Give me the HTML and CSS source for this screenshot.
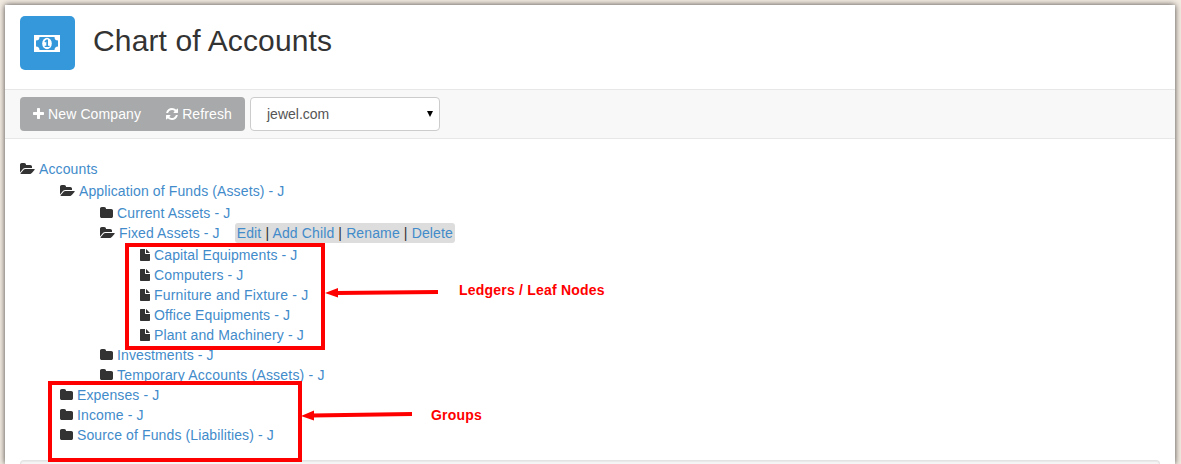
FILE: index.html
```html
<!DOCTYPE html>
<html lang="en">
<head>
<meta charset="utf-8">
<title>Chart of Accounts</title>
<link rel="stylesheet" href="styles.css">
</head>
<body>
<svg class="sprite" aria-hidden="true">
  <symbol id="folder" viewBox="64 0 1664 1792"><path d="M1728 608v704q0 92-66 158t-158 66h-1216q-92 0-158-66t-66-158v-960q0-92 66-158t158-66h320q92 0 158 66t66 158v32h672q92 0 158 66t66 158z"/></symbol>
  <symbol id="folder-open" viewBox="0 0 1920 1792"><path d="M1879 952q0 31-31 66l-336 396q-43 51-120.500 86.500t-143.500 35.500h-1088q-34 0-60.500-13t-26.500-43q0-31 31-66l336-396q43-51 120.500-86.500t143.500-35.500h1088q34 0 60.500 13t26.500 43zm-343-344v160h-832q-94 0-197 47.500t-164 119.500l-337 396-5 6q0-4-.5-12.500t-.5-12.500v-960q0-92 66-158t158-66h320q92 0 158 66t66 158v32h544q92 0 158 66t66 158z"/></symbol>
  <symbol id="file" viewBox="0 0 10 14"><path d="M.7 1H5v4.300q0 .7.700.7H10v6.300q0 .7-.7.700H.7q-.7 0-.7-.7V1.700Q0 1 .7 1zM6 1.100q.3.100.6.400l2.900 2.900q.3.300.4.600H6z"/></symbol>
  <symbol id="plus" viewBox="192 0 1408 1792"><path d="M1600 736v192q0 40-28 68t-68 28h-416v416q0 40-28 68t-68 28h-192q-40 0-68-28t-28-68v-416h-416q-40 0-68-28t-28-68v-192q0-40 28-68t68-28h416v-416q0-40 28-68t68-28h192q40 0 68 28t28 68v416h416q40 0 68 28t28 68z"/></symbol>
  <symbol id="refresh" viewBox="128 0 1536 1792"><path d="M1639 1056q0 5-1 7-64 268-268 434.500t-478 166.500q-146 0-282.500-55t-243.500-157l-129 129q-19 19-45 19t-45-19-19-45v-448q0-26 19-45t45-19h448q26 0 45 19t19 45-19 45l-137 137q71 66 161 102t187 36q134 0 250-65t186-179q11-17 53-117 8-23 30-23h192q13 0 22.500 9.500t9.500 22.500zm25-800v448q0 26-19 45t-45 19h-448q-26 0-45-19t-19-45 19-45l138-138q-148-137-349-137-134 0-250 65t-186 179q-11 17-53 117-8 23-30 23h-199q-13 0-22.500-9.500t-9.500-22.500v-7q65-268 270-434.500t480-166.500q146 0 284 55.500t245 156.500l130-129q19-19 45-19t45 19 19 45z"/></symbol>
</svg>
<main class="page">
  <header class="head">
    <span class="app-icon">
      <svg width="26" height="17" viewBox="0 0 26 17"><path fill-rule="evenodd" d="M0 0h26v17H0zM5.500 2A3.500 3.500 0 0 1 2 5.500v6A3.500 3.500 0 0 1 5.500 15h15A3.500 3.500 0 0 1 24 11.500v-6A3.500 3.500 0 0 1 20.500 2z"/><ellipse cx="13" cy="8.500" rx="4.800" ry="5.800"/><path class="coin" d="M12.300 4.500h1.700v6.200h1.500V12h-4.800v-1.300h1.600V6.600l-1 .8-.9-1z"/></svg>
    </span>
    <h1 class="title">Chart of Accounts</h1>
  </header>
  <div class="toolbar">
    <div class="buttons">
      <a class="button"><svg class="icon" width="11" height="14"><use href="#plus"/></svg>New Company</a>
      <a class="button"><svg class="icon" width="12" height="14"><use href="#refresh"/></svg>Refresh</a>
    </div>
    <div class="select"><span>jewel.com</span><svg width="6" height="6" viewBox="0 0 6 6"><path d="M0 0h6L3 6z"/></svg></div>
  </div>
  <div class="content">
    <ul class="tree root">
      <li><div class="node"><svg class="icon" width="15" height="14"><use href="#folder-open"/></svg><a>Accounts</a></div>
        <ul class="tree">
          <li><div class="node"><svg class="icon" width="15" height="14"><use href="#folder-open"/></svg><a>Application of Funds (Assets) - J</a></div>
            <ul class="tree">
              <li><div class="node"><svg class="icon" width="13" height="14"><use href="#folder"/></svg><a>Current Assets - J</a></div></li>
              <li><div class="node"><svg class="icon" width="15" height="14"><use href="#folder-open"/></svg><a>Fixed Assets - J</a><span class="actions"><a>Edit</a> | <a>Add Child</a> | <a>Rename</a> | <a>Delete</a></span></div>
                <ul class="tree">
                  <li><div class="node"><svg class="icon" width="10" height="14"><use href="#file"/></svg><a>Capital Equipments - J</a></div></li>
                  <li><div class="node"><svg class="icon" width="10" height="14"><use href="#file"/></svg><a>Computers - J</a></div></li>
                  <li><div class="node wide"><svg class="icon" width="10" height="14"><use href="#file"/></svg><a>Furniture and Fixture - J</a></div></li>
                  <li><div class="node"><svg class="icon" width="10" height="14"><use href="#file"/></svg><a>Office Equipments - J</a></div></li>
                  <li><div class="node"><svg class="icon" width="10" height="14"><use href="#file"/></svg><a>Plant and Machinery - J</a></div></li>
                </ul>
              </li>
              <li><div class="node"><svg class="icon" width="13" height="14"><use href="#folder"/></svg><a>Investments - J</a></div></li>
              <li><div class="node wide"><svg class="icon" width="13" height="14"><use href="#folder"/></svg><a>Temporary Accounts (Assets) - J</a></div></li>
            </ul>
          </li>
          <li><div class="node"><svg class="icon" width="13" height="14"><use href="#folder"/></svg><a>Expenses - J</a></div></li>
          <li><div class="node"><svg class="icon" width="13" height="14"><use href="#folder"/></svg><a>Income - J</a></div></li>
          <li><div class="node"><svg class="icon" width="13" height="14"><use href="#folder"/></svg><a>Source of Funds (Liabilities) - J</a></div></li>
        </ul>
      </li>
    </ul>
    <div class="well"></div>
  </div>
</main>
<!-- Annotations over the tree -->
<svg class="notes" width="1181" height="464">
  <rect x="127" y="245" width="196" height="103"/>
  <rect x="50" y="383" width="250" height="77"/>
  <path d="M336 293L438 292M312 415.500L412 414"/>
  <path class="tip" d="M325 293L338 288V297.500zM301 416L314 410.500V420.500z"/>
</svg>
<span class="note ledgers">Ledgers / Leaf Nodes</span>
<span class="note groups">Groups</span>
</body>
</html>
```
FILE: styles.css
```css
* { box-sizing: border-box; }
body {
  margin: 0;
  height: 464px;
  overflow: hidden;
  padding: 5px 6px 0 5px;
  background: #f2ebe2;
  font: 14px/20px "Liberation Sans", Arial, sans-serif;
  color: #333;
}
.sprite { position: absolute; width: 0; height: 0; }
.page {
  display: flex; flex-direction: column; height: 459px;
  background: #fff; box-shadow: 0 0 6px rgba(0,0,0,.7);
}
.head { display: flex; flex: none; height: 84px; padding: 11px 15px 0; }
.app-icon {
  display: flex; align-items: center; justify-content: center;
  width: 55px; height: 54px; padding: 0 1px 0 0;
  border-radius: 5px; background: #3498db; fill: #fff;
}
.coin { fill: #3498db; }
.title { margin: 8px 0 0 18px; font-size: 30px; line-height: 33px; font-weight: 400; letter-spacing: .14px; }
.toolbar {
  display: flex; flex: none; gap: 5px; height: 50px; padding: 7px 15px;
  background: #f8f8f8; border: solid #e7e7e7; border-width: 1px 0;
}
.buttons {
  display: flex; width: 225px; height: 34px; border-radius: 4px;
  background: #a7a9aa; color: #fff; letter-spacing: .12px;
}
.button { display: flex; align-items: center; padding: 0 12px 0 13px; }
.button .icon { fill: #fff; }
.icon { flex: none; margin-right: 4px; fill: #333; }
.select {
  display: flex; align-items: center; justify-content: space-between;
  width: 190px; height: 34px; padding: 0 6px 0 16px;
  border: 1px solid #ccc; border-radius: 4px; background: #fff; color: #555;
}
.select svg { fill: #000; }
.content { display: flex; flex-direction: column; flex: 1; min-height: 0; padding: 20px 15px 0; }
.tree { list-style: none; margin: 2px 0 0; padding: 0 0 0 40px; letter-spacing: .12px; }
.root { flex: none; margin: 0; padding: 0; }
.node { display: flex; align-items: center; height: 20px; white-space: nowrap; }
.node a { color: #428bca; }
.wide { letter-spacing: .2px; }
.actions { margin-left: 15px; padding: 0 2px; background: #ddd; border-radius: 3px; letter-spacing: .13px; }
.well {
  flex: none; height: 4px; margin-top: 15px;
  border: solid #e3e3e3; border-width: 1px 1px 0; border-radius: 4px 4px 0 0;
  background: #f5f5f5; box-shadow: inset 0 1px 1px rgba(0,0,0,.05);
}
.notes { position: absolute; left: 0; top: 0; fill: none; stroke: #f00; stroke-width: 4px; }
.tip { fill: #f00; stroke: none; }
.note { position: absolute; color: #f00; font-weight: 700; white-space: nowrap; letter-spacing: .21px; }
.ledgers { left: 459px; top: 280px; }
.groups { left: 431px; top: 405px; }
```
